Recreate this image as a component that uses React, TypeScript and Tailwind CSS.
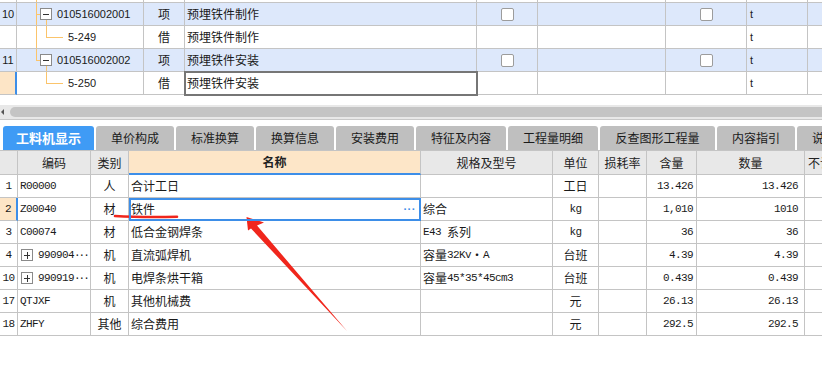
import React from 'react';

const cn = "font-['Noto_Sans_CJK_SC',sans-serif] text-[12px]";
const mono = "font-['Liberation_Mono',monospace] text-[11px] tracking-[-0.6px]";
const sans = "font-['Liberation_Sans',sans-serif] text-[11px]";
const line = 'border-[#c4c4c4]';
const OR = '#fbc46b';

// split mixed text: CJK glyphs in Noto, latin in a narrow mono
function Mixed({ text }: { text: string }) {
  const parts = text.match(/[\u4e00-\u9fff\u30fb]+|[^\u4e00-\u9fff\u30fb]+/g) ?? [];
  return (
    <>
      {parts.map((p, i) =>
        /[\u4e00-\u9fff\u30fb]/.test(p) ? (
          <span key={i} className={cn}>{p}</span>
        ) : (
          <span key={i} className={`${mono} whitespace-pre`}>{p}</span>
        )
      )}
    </>
  );
}

function Checkbox() {
  return <span className="w-[13px] h-[13px] rounded-[2px] border border-[#9c9c9c] bg-white" />;
}

type TreeKind = 'stub' | 'open' | 'openLast' | 'leaf' | 'leafLast';

function Tree({ kind }: { kind: TreeKind }) {
  const h = kind === 'stub' ? 2 : 22;
  const isOpen = kind === 'open' || kind === 'openLast';
  return (
    <svg className="absolute left-0 top-0" width="126" height={h} shapeRendering="crispEdges">
      {kind === 'stub' && <line x1="19.5" y1="0" x2="19.5" y2="2" stroke={OR} />}
      {isOpen && (
        <>
          <line x1="19.5" y1="0" x2="19.5" y2={kind === 'open' ? 22 : 11.5} stroke={OR} />
          <line x1="19" y1="11.5" x2="23" y2="11.5" stroke={OR} />
          <line x1="29.5" y1="17" x2="29.5" y2="22" stroke={OR} />
          <rect x="23.5" y="5.5" width="11" height="11" fill="#fff" stroke="#8a8a8a" />
          <line x1="26" y1="11.5" x2="32" y2="11.5" stroke="#333" />
        </>
      )}
      {!isOpen && kind !== 'stub' && (
        <>
          {kind === 'leaf' && <line x1="19.5" y1="0" x2="19.5" y2="22" stroke={OR} />}
          <line x1="29.5" y1="0" x2="29.5" y2="11.5" stroke={OR} />
          <line x1="29.5" y1="11.5" x2="46" y2="11.5" stroke={OR} />
        </>
      )}
    </svg>
  );
}

const topRows = [
  { num: '10', code: '010516002001', tree: 'open' as TreeKind, type: '项', name: '预埋铁件制作', parent: true },
  { num: '', code: '5-249', tree: 'leaf' as TreeKind, type: '借', name: '预埋铁件制作', parent: false },
  { num: '11', code: '010516002002', tree: 'openLast' as TreeKind, type: '项', name: '预埋铁件安装', parent: true },
  { num: '', code: '5-250', tree: 'leafLast' as TreeKind, type: '借', name: '预埋铁件安装', parent: false, current: true },
];

function TopGrid() {
  const c = `shrink-0 border-r border-b ${line}`;
  return (
    <div>
      <div className="flex h-[3px]">
        <div className={`w-[17px] ${c}`} />
        <div className={`relative w-[127px] ${c}`}>
          <Tree kind="stub" />
        </div>
        <div className={`w-[41px] ${c}`} />
        <div className={`w-[292px] ${c}`} />
        <div className={`w-[61px] ${c}`} />
        <div className={`w-[128px] ${c}`} />
        <div className={`w-[81px] ${c}`} />
        <div className={`w-[61px] ${c}`} />
        <div className={`flex-1 border-b ${line}`} />
      </div>
      {topRows.map((r, i) => (
        <div key={i} className={`flex h-[23px] ${r.parent ? 'bg-[#dde8fb]' : 'bg-white'}`}>
          <div
            className={`w-[17px] shrink-0 border-b ${line} flex items-center justify-center ${sans} ${
              r.current ? 'bg-[#fde5c6] border-r-2 border-r-[#3d8ee8]' : 'border-r'
            }`}
          >
            {r.num}
          </div>
          <div className={`relative w-[127px] ${c} flex items-center`}>
            <Tree kind={r.tree} />
            <span className={`relative ${sans} ${r.parent ? 'pl-[40px]' : 'pl-[51px]'}`}>{r.code}</span>
          </div>
          <div className={`w-[41px] ${c} flex items-center justify-center ${cn}`}>{r.type}</div>
          <div
            className={`w-[292px] ${c} flex items-center pl-[2px] ${cn} ${
              r.current ? 'outline-2 -outline-offset-1 outline-[#767676] relative z-10' : ''
            }`}
          >
            {r.name}
          </div>
          <div className={`w-[61px] ${c} flex items-center justify-center`}>{r.parent && <Checkbox />}</div>
          <div className={`w-[128px] ${c}`} />
          <div className={`w-[81px] ${c} flex items-center justify-center`}>{r.parent && <Checkbox />}</div>
          <div className={`w-[61px] ${c} flex items-center pl-[3px] ${sans}`}>t</div>
          <div className={`flex-1 border-b ${line}`} />
        </div>
      ))}
    </div>
  );
}

function ScrollBar() {
  return (
    <div>
      <div className="flex h-[14px] items-center bg-[#e8e8e8]">
        <svg width="10" height="14" className="shrink-0">
          <polygon points="1,7 4,4 4,10" fill="#555" />
        </svg>
        <div className="h-[10px] flex-1 rounded-l-[5px] bg-[#c4c4c4]" />
      </div>
      <div className="h-px bg-[#c8c8c8]" />
    </div>
  );
}

const tabs = [
  { label: '单价构成', w: 'w-[78px]' },
  { label: '标准换算', w: 'w-[78px]' },
  { label: '换算信息', w: 'w-[78px]' },
  { label: '安装费用', w: 'w-[78px]' },
  { label: '特征及内容', w: 'w-[90px]' },
  { label: '工程量明细', w: 'w-[90px]' },
  { label: '反查图形工程量', w: 'w-[115px]' },
  { label: '内容指引', w: 'w-[78px]' },
];

function Tabs() {
  return (
    <div className="flex h-[24px] gap-[2px] pl-[3px] overflow-hidden">
      <div className="w-[91px] shrink-0 rounded-t-[3px] bg-[#3f9bf5] flex items-center justify-center font-['Noto_Sans_CJK_SC',sans-serif] text-[13px] font-bold text-white">
        工料机显示
      </div>
      {tabs.map((t) => (
        <div
          key={t.label}
          className={`${t.w} shrink-0 rounded-t-[3px] bg-[#bfbfbf] flex items-center justify-center ${cn} text-[#1a1a1a]`}
        >
          {t.label}
        </div>
      ))}
      <div className={`w-[25px] shrink-0 rounded-tl-[3px] bg-[#bfbfbf] flex items-center pl-[15px] overflow-hidden ${cn} text-[#1a1a1a]`}>
        说
      </div>
    </div>
  );
}

const items = [
  { n: '1', code: 'R00000', type: '人', name: '合计工日', spec: '', unit: '工日', qty: '13.426', num: '13.426' },
  { n: '2', code: 'Z00040', type: '材', name: '铁件', spec: '综合', unit: 'kg', qty: '1,010', num: '1010', sel: true },
  { n: '3', code: 'C00074', type: '材', name: '低合金钢焊条', spec: 'E43 系列', unit: 'kg', qty: '36', num: '36' },
  { n: '4', code: '990904', type: '机', name: '直流弧焊机', spec: '容量32Kv・A', unit: '台班', qty: '4.39', num: '4.39', plus: true },
  { n: '10', code: '990919', type: '机', name: '电焊条烘干箱', spec: '容量45*35*45cm3', unit: '台班', qty: '0.439', num: '0.439', plus: true },
  { n: '17', code: 'QTJXF', type: '机', name: '其他机械费', spec: '', unit: '元', qty: '26.13', num: '26.13' },
  { n: '18', code: 'ZHFY', type: '其他', name: '综合费用', spec: '', unit: '元', qty: '292.5', num: '292.5' },
];

function PlusBox() {
  return (
    <svg width="12" height="12" className="shrink-0" shapeRendering="crispEdges">
      <rect x="0.5" y="0.5" width="11" height="11" fill="#fff" stroke="#8a8a8a" />
      <line x1="3" y1="6.5" x2="9" y2="6.5" stroke="#333" />
      <line x1="6.5" y1="3" x2="6.5" y2="10" stroke="#333" />
    </svg>
  );
}

function BottomGrid() {
  const c = `shrink-0 border-r border-b ${line}`;
  const h = `bg-[#e8e8e8] flex items-center justify-center ${cn} text-[#222]`;
  return (
    <div className={`border-t ${line}`}>
      <div className="flex h-[24px]">
        <div className={`w-[18px] ${c} ${h}`} />
        <div className={`w-[73px] ${c} ${h}`}>编码</div>
        <div className={`w-[38px] ${c} ${h}`}>类别</div>
        <div className={`w-[292px] shrink-0 border-r ${line} border-b-2 border-b-[#3d8ee8] bg-[#fde6c8] flex items-center justify-center ${cn} font-bold text-[#222]`}>
          名称
        </div>
        <div className={`w-[132px] ${c} ${h}`}>规格及型号</div>
        <div className={`w-[46px] ${c} ${h}`}>单位</div>
        <div className={`w-[48px] ${c} ${h}`}>损耗率</div>
        <div className={`w-[50px] ${c} ${h}`}>含量</div>
        <div className={`w-[108px] ${c} ${h}`}>数量</div>
        <div className={`w-[60px] ${c} ${h} justify-start pl-[3px] overflow-hidden`}>不计</div>
      </div>
      {items.map((r) => (
        <div key={r.n} className="flex h-[23px]">
          <div
            className={`w-[18px] shrink-0 border-b ${line} flex items-center justify-center ${mono} ${
              r.sel ? 'bg-[#fde5c6] border-r-2 border-r-[#3d8ee8]' : 'border-r'
            }`}
          >
            {r.n}
          </div>
          <div className={`w-[73px] ${c} flex items-center overflow-hidden ${r.plus ? 'pl-[3px]' : 'pl-[2px]'} ${mono}`}>
            {r.plus && <PlusBox />}
            <span className={r.plus ? 'ml-[5px]' : ''}>{r.code}</span>
            {r.plus && <span className="tracking-[-2px]">···</span>}
          </div>
          <div className={`w-[38px] ${c} flex items-center justify-center ${cn}`}>{r.type}</div>
          <div
            className={`w-[292px] ${c} flex items-center pl-[2px] pr-[6px] ${cn} ${
              r.sel ? 'outline-2 -outline-offset-2 outline-[#3d8ee8] relative z-10' : ''
            }`}
          >
            <span className="flex-1">{r.name}</span>
            {r.sel && <span className={`${mono} text-[#3d8ee8] font-bold tracking-[-2.5px]`}>···</span>}
          </div>
          <div className={`w-[132px] ${c} flex items-center pl-[2px]`}>
            <Mixed text={r.spec} />
          </div>
          <div className={`w-[46px] ${c} flex items-center justify-center`}>
            <Mixed text={r.unit} />
          </div>
          <div className={`w-[48px] ${c}`} />
          <div className={`w-[50px] ${c} flex items-center justify-end pr-[3px] ${mono}`}>{r.qty}</div>
          <div className={`w-[108px] ${c} flex items-center justify-end pr-[6px] ${mono}`}>{r.num}</div>
          <div className={`w-[60px] ${c}`} />
        </div>
      ))}
    </div>
  );
}

function Annotation() {
  return (
    <svg className="absolute left-0 top-0 pointer-events-none" width="822" height="381">
      <path d="M115 216 Q140 217.5 177 216.8" stroke="#f0261c" strokeWidth="2.6" fill="none" strokeLinecap="round" />
      <polygon points="246.5,217 264,222.5 257,225.5 347,331 251,228.5 248,230.5" fill="#f0261c" />
    </svg>
  );
}

export default function App() {
  return (
    <div className="relative w-[822px] h-[381px] overflow-hidden bg-white text-[#1a1a1a]">
      <TopGrid />
      <div className="h-[10px]" />
      <ScrollBar />
      <div className="h-[6px]" />
      <Tabs />
      <BottomGrid />
      <Annotation />
    </div>
  );
}
